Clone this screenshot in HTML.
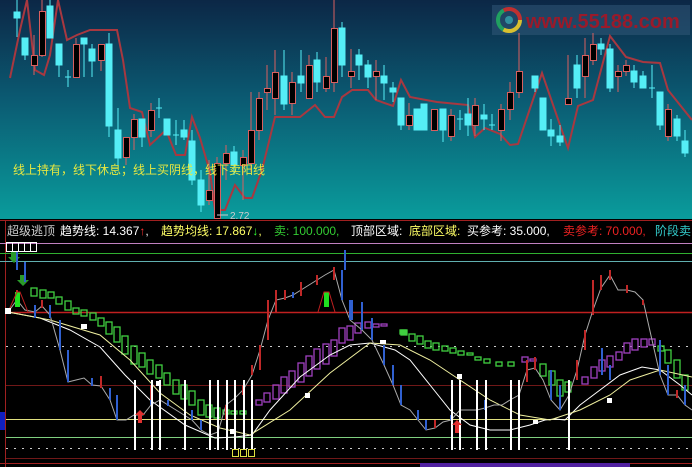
<!DOCTYPE html>
<html><head><meta charset="utf-8"><style>
html,body{margin:0;padding:0;background:#000;width:692px;height:467px;overflow:hidden}
svg{display:block}
text{font-family:"Liberation Sans","Noto Sans CJK SC",sans-serif}
</style></head><body>
<svg width="692" height="467" viewBox="0 0 692 467" xmlns="http://www.w3.org/2000/svg">
<defs><linearGradient id="bg" x1="0" y1="0" x2="0" y2="1"><stop offset="0" stop-color="#0c2746"/><stop offset="0.45" stop-color="#0b5a72"/><stop offset="1" stop-color="#0a9c9c"/></linearGradient></defs>
<rect x="0" y="0" width="692" height="219" fill="url(#bg)"/>
<rect x="0" y="219" width="692" height="248" fill="#000"/>
<!-- logo -->
<rect x="492" y="5" width="198" height="30" fill="#3a6080" opacity="0.45"/>
<circle cx="509" cy="20" r="11" fill="none" stroke="#d8c030" stroke-width="4" stroke-dasharray="23 46"/>
<circle cx="509" cy="20" r="11" fill="none" stroke="#20a060" stroke-width="4" stroke-dasharray="0 23 23 46"/>
<circle cx="509" cy="20" r="11" fill="none" stroke="#c03030" stroke-width="4" stroke-dasharray="0 46 23 0"/>
<circle cx="509" cy="20" r="4" fill="#3090a0"/>
<text x="526" y="28" font-size="20" font-weight="bold" fill="#9a1a2a" font-family="Liberation Sans">www.55188.com</text>
<!-- MA line -->
<polyline fill="none" stroke="#a83840" stroke-width="2" points="10,78 20,30 27,0 35,70 44,75 50,55 58,0 67,40 77,35 90,30 117,30 123,60 130,108 142,112 150,145 166,130 176,155 185,155 192,117 200,138 210,172 215,210 225,210 235,185 245,198 252,198 262,170 275,117 300,117 315,105 325,117 334,117 342,97 352,90 368,90 376,100 393,106 401,80 410,97 426,100 437,102 468,105 475,137 485,128 500,134 510,145 518,144 542,73 568,148 578,106 593,100 610,36 626,57 643,62 660,63 668,90 692,120"/>
<!-- cyan candles -->
<g stroke="#55eef6" fill="#55eef6" stroke-width="1">
<path d="M17,0V37M25,38V60M50,0V38M59,44V77M84,38V77M92,44V77M109,33V137M118,108V165M142,119V147M167,119V135M184,120V140M192,130V185M201,170V212M234,146V175M284,50V110M301,50V92M317,52V92M342,22V77M359,49V80M368,60V88M384,65V100M393,82V102M401,98V130M417,109V130M424,104V130M443,109V142M468,98V136M484,104V130M535,76V92M543,98V130M551,119V146M560,125V146M577,55V98M601,38V55M610,44V92M634,65V88M643,71V88M660,92V130M677,115V141M685,130V157"/>
<rect x="14" y="12" width="6" height="6"/><rect x="22" y="38" width="6" height="17"/><rect x="47" y="6" width="6" height="32"/><rect x="56" y="44" width="6" height="21"/><rect x="81" y="38" width="6" height="6"/><rect x="89" y="49" width="6" height="12"/><rect x="106" y="44" width="6" height="82"/><rect x="115" y="130" width="6" height="28"/><rect x="139" y="119" width="6" height="18"/><rect x="164" y="119" width="6" height="16"/><rect x="181" y="130" width="6" height="7"/><rect x="189" y="141" width="6" height="39"/><rect x="198" y="180" width="6" height="25"/><rect x="231" y="152" width="6" height="13"/><rect x="281" y="76" width="6" height="28"/><rect x="298" y="76" width="6" height="7"/><rect x="314" y="60" width="6" height="22"/><rect x="339" y="28" width="6" height="37"/><rect x="356" y="55" width="6" height="10"/><rect x="365" y="65" width="6" height="12"/><rect x="381" y="76" width="6" height="7"/><rect x="390" y="88" width="6" height="4"/><rect x="398" y="98" width="6" height="27"/><rect x="414" y="109" width="6" height="21"/><rect x="421" y="104" width="6" height="26"/><rect x="440" y="109" width="6" height="21"/><rect x="465" y="114" width="6" height="11"/><rect x="481" y="115" width="6" height="4"/><rect x="532" y="76" width="6" height="12"/><rect x="540" y="98" width="6" height="32"/><rect x="548" y="130" width="6" height="6"/><rect x="557" y="136" width="6" height="6"/><rect x="574" y="65" width="6" height="23"/><rect x="598" y="44" width="6" height="5"/><rect x="607" y="49" width="6" height="39"/><rect x="631" y="71" width="6" height="11"/><rect x="640" y="76" width="6" height="12"/><rect x="657" y="92" width="6" height="33"/><rect x="674" y="119" width="6" height="17"/><rect x="682" y="141" width="6" height="12"/>
<path d="M65,77H71M156,108H162M173,135H179M457,119H463M489,125H495M649,88H655"/>
<path d="M68,70V87M159,98V118M176,120V145M460,110V130M492,114V130M652,65V98"/>
</g>
<!-- hollow candles -->
<g stroke="#d86060" fill="#000" stroke-width="1">
<path d="M34,35V75M42,0V57M76,38V77M101,44V71M126,137V165M134,114V150M151,103V137M209,160V205M217,157V218M226,145V180M243,150V200M251,92V172M259,92V140M267,65V110M275,50V115M292,72V115M309,55V98M326,57V92M334,0V92M351,49V88M376,60V100M409,103V130M434,109V130M451,109V141M475,98V136M501,104V141M510,82V120M519,33V98M568,55V104M585,38V98M593,33V65M618,65V92M626,60V76M668,104V141"/>
<rect x="31.5" y="55.5" width="6" height="10"/><rect x="39.5" y="11.5" width="6" height="44"/><rect x="73.5" y="44.5" width="6" height="33"/><rect x="98.5" y="44.5" width="6" height="16"/><rect x="123.5" y="137.5" width="6" height="20"/><rect x="131.5" y="119.5" width="6" height="18"/><rect x="148.5" y="110.5" width="6" height="20"/><rect x="206.5" y="190.5" width="6" height="10"/><rect x="214.5" y="163.5" width="6" height="55"/><rect x="223.5" y="153.5" width="6" height="10"/><rect x="240.5" y="157.5" width="6" height="8"/><rect x="248.5" y="130.5" width="6" height="33"/><rect x="256.5" y="98.5" width="6" height="32"/><rect x="264.5" y="88.5" width="6" height="4"/><rect x="272.5" y="72.5" width="6" height="26"/><rect x="289.5" y="82.5" width="6" height="21"/><rect x="306.5" y="65.5" width="6" height="33"/><rect x="323.5" y="76.5" width="6" height="12"/><rect x="331.5" y="28.5" width="6" height="54"/><rect x="348.5" y="71.5" width="6" height="5"/><rect x="373.5" y="71.5" width="6" height="5"/><rect x="406.5" y="115.5" width="6" height="10"/><rect x="431.5" y="109.5" width="6" height="21"/><rect x="448.5" y="115.5" width="6" height="21"/><rect x="472.5" y="105.5" width="6" height="20"/><rect x="498.5" y="109.5" width="6" height="21"/><rect x="507.5" y="92.5" width="6" height="17"/><rect x="516.5" y="71.5" width="6" height="21"/><rect x="565.5" y="98.5" width="6" height="6"/><rect x="582.5" y="55.5" width="6" height="21"/><rect x="590.5" y="44.5" width="6" height="16"/><rect x="615.5" y="71.5" width="6" height="5"/><rect x="623.5" y="65.5" width="6" height="6"/><rect x="665.5" y="109.5" width="6" height="27"/>
</g>
<text x="13" y="174" font-size="12" fill="#e8e840">线上持有，线下休息；线上买阴线，线下卖阳线</text>
<path d="M217,215H228" stroke="#ccc"/>
<text x="230" y="219" font-size="10" fill="#ccc" font-family="Liberation Sans">2.72</text>
<!-- lower panel frame -->
<path d="M0,220.5H692" stroke="#a02020"/>
<path d="M5.5,220V467" stroke="#a02020"/>
<path d="M0,463.5H692" stroke="#a02020"/>
<rect x="420" y="463" width="210" height="4" fill="#5020a0"/>
<text y="235" font-size="12" font-family="Liberation Sans,Noto Sans CJK SC,sans-serif"><tspan x="7" fill="#ccc">超级逃顶</tspan><tspan x="60" fill="#fff">趋势线: 14.367</tspan><tspan fill="#f33">↑</tspan><tspan fill="#fff">,</tspan><tspan x="161" fill="#ff6">趋势均线: 17.867</tspan><tspan fill="#3f3">↓</tspan><tspan fill="#ff6">,</tspan><tspan x="274" fill="#3c3">卖: 100.000,</tspan><tspan x="351" fill="#fff">顶部区域:</tspan><tspan x="409" fill="#ff6">底部区域:</tspan><tspan x="467" fill="#fff">买参考: 35.000,</tspan><tspan x="563" fill="#e22">卖参考: 70.000,</tspan><tspan x="655" fill="#3cc">阶段卖</tspan></text>
<path d="M0,243.5H692" stroke="#c080c0"/>
<path d="M0,253.5H692" stroke="#30b030"/>
<path d="M0,261.5H692" stroke="#60b0b0"/>
<g fill="none" stroke="#fff"><rect x="6.5" y="242.5" width="6" height="9"/><rect x="12.5" y="242.5" width="6" height="9"/><rect x="18.5" y="242.5" width="6" height="9"/><rect x="24.5" y="242.5" width="6" height="9"/><rect x="30.5" y="242.5" width="6" height="9"/></g>
<path d="M11,252h6v5h3l-6,6l-6,-6h3z" fill="#2a9a2a"/>
<path d="M20,275h6v5h3l-6,6l-6,-6h3z" fill="#2a9a2a"/>
<!-- horizontal levels -->
<path d="M6,312.5H692" stroke="#c02020" stroke-width="1.5"/>
<path d="M6,346.5H692" stroke="#ccc" stroke-dasharray="2 6"/>
<path d="M6,385.5H692" stroke="#701818"/>
<path d="M6,419.5H692" stroke="#e0e080"/>
<path d="M6,437.5H692" stroke="#80d080"/>
<path d="M6,448.5H692" stroke="#ccc" stroke-dasharray="2 6"/>
<path d="M6,458.5H692" stroke="#701818"/>
<rect x="0" y="412" width="5" height="18" fill="#1020c0"/>
<!-- green boxes -->
<g fill="none" stroke="#40d040" stroke-width="1.3">
<rect x="31" y="288" width="6" height="8"/><rect x="40" y="290" width="6" height="8"/><rect x="48" y="292" width="6" height="6"/><rect x="56" y="297" width="6" height="7"/><rect x="65" y="301" width="6" height="9"/><rect x="73" y="308" width="6" height="6"/><rect x="81" y="310" width="6" height="6"/><rect x="90" y="313" width="6" height="7"/><rect x="98" y="318" width="6" height="8"/><rect x="106" y="322" width="6" height="12"/><rect x="114" y="327" width="6" height="15"/><rect x="122" y="336" width="6" height="18"/><rect x="131" y="346" width="6" height="18"/><rect x="139" y="353" width="6" height="14"/><rect x="147" y="360" width="6" height="14"/><rect x="156" y="365" width="6" height="13"/><rect x="164" y="373" width="6" height="12"/><rect x="173" y="380" width="6" height="14"/><rect x="181" y="385" width="6" height="14"/><rect x="189" y="391" width="6" height="14"/><rect x="198" y="400" width="6" height="15"/><rect x="206" y="405" width="6" height="12"/><rect x="214" y="408" width="6" height="10"/><rect x="223" y="410" width="6" height="4"/><rect x="231" y="411" width="6" height="3"/><rect x="240" y="411" width="6" height="3"/>
<rect x="400" y="330" width="6" height="4" fill="#40d040"/><rect x="401" y="330" width="6" height="5"/><rect x="409" y="334" width="6" height="7"/><rect x="417" y="336" width="6" height="8"/><rect x="425" y="341" width="6" height="7"/><rect x="433" y="343" width="6" height="7"/><rect x="442" y="346" width="6" height="5"/><rect x="450" y="348" width="6" height="5"/><rect x="458" y="351" width="6" height="4"/><rect x="467" y="353" width="6" height="2"/><rect x="475" y="357" width="6" height="3"/><rect x="484" y="359" width="6" height="4"/><rect x="496" y="362" width="6" height="4"/><rect x="508" y="362" width="6" height="4"/>
<rect x="540" y="364" width="6" height="12"/><rect x="549" y="371" width="6" height="14"/><rect x="557" y="380" width="6" height="16"/><rect x="565" y="382" width="6" height="10"/>
<rect x="658" y="346" width="6" height="5"/><rect x="665" y="350" width="6" height="13"/><rect x="674" y="360" width="6" height="18"/><rect x="682" y="375" width="6" height="15"/>
</g>
<!-- purple boxes -->
<g fill="none" stroke="#a040c0" stroke-width="1.3">
<rect x="256" y="400" width="6" height="5"/><rect x="264" y="393" width="6" height="9"/><rect x="273" y="385" width="6" height="14"/><rect x="281" y="377" width="6" height="16"/><rect x="289" y="371" width="6" height="16"/><rect x="298" y="363" width="6" height="19"/><rect x="306" y="356" width="6" height="20"/><rect x="314" y="349" width="6" height="20"/><rect x="323" y="344" width="6" height="20"/><rect x="331" y="340" width="6" height="16"/><rect x="339" y="328" width="6" height="15"/><rect x="347" y="326" width="6" height="14"/><rect x="355" y="323" width="6" height="10"/><rect x="365" y="322" width="6" height="6"/><rect x="373" y="324" width="6" height="3"/><rect x="381" y="324" width="6" height="2"/>
<rect x="522" y="357" width="6" height="5"/><rect x="530" y="359" width="6" height="2"/>
<rect x="582" y="377" width="6" height="7"/><rect x="591" y="367" width="6" height="11"/><rect x="599" y="360" width="6" height="11"/><rect x="607" y="356" width="6" height="11"/><rect x="616" y="352" width="6" height="8"/><rect x="624" y="343" width="6" height="10"/><rect x="632" y="339" width="6" height="11"/><rect x="641" y="339" width="6" height="8"/><rect x="649" y="339" width="6" height="6"/>
</g>
<!-- curves -->
<polyline fill="none" stroke="#fff" stroke-width="1" points="8,312 40,318 70,330 100,347 125,375 150,400 185,425 215,438 235,437 252,435 270,410 300,377 330,355 350,345 370,343 395,350 410,360 430,385 450,410 470,425 490,430 510,430 530,425 545,420 555,419 565,420 580,405 600,390 620,375 642,367 660,370 680,385 692,395"/>
<polyline fill="none" stroke="#f0f0a0" stroke-width="1" points="8,312 50,320 100,335 130,360 160,393 190,415 220,428 250,435 290,410 330,373 370,343 400,345 430,360 460,380 490,400 520,415 550,420 580,410 610,395 630,380 660,370 692,377"/>
<!-- zigzag -->
<polyline fill="none" stroke="#aaa" stroke-width="1" points="8,312 17,300 25,310 35,312 42,306 50,315 60,350 68,382 76,380 84,378 92,385 101,386 110,400 117,420 126,420 134,415 143,415 151,405 160,400 168,405 176,410 184,415 192,420 201,430 210,435 218,432 226,405 235,398 243,390 252,375 260,350 268,320 276,300 285,298 293,295 301,290 309,285 317,280 325,275 334,270 342,300 350,320 362,330 372,340 384,365 393,385 401,405 410,410 418,420 426,430 435,428 443,422 451,420 460,410 468,410 477,410 485,408 494,405 502,405 510,400 519,395 527,370 535,368 543,380 551,400 560,410 569,395 577,370 585,335 593,310 601,288 610,275 618,290 627,290 635,292 643,300 652,340 660,375 668,395 677,395 685,405 692,410"/>
<g fill="none" stroke-width="2">
<path stroke="#3060d0" d="M17,252V270M25,262V282M35,305V318M50,305V318M60,320V350M68,350V382M92,378V386M110,388V400M117,395V420M151,395V405M168,400V406M192,410V420M201,420V430M210,425V435M268,300V320M293,292V298M342,270V300M350,300V320M345,250V270M352,300V320M362,302V330M372,318V340M384,345V365M393,365V385M401,385V405M418,410V420M426,420V430M451,415V420M460,405V418M485,400V410M551,370V400M560,385V410M602,348V375M610,365V380M660,340V375M668,365V395M685,385V405"/>
<path stroke="#c02828" d="M17,290V300M42,300V308M101,376V388M151,385V400M226,405V420M243,385V395M252,365V375M260,345V370M268,300V340M276,290V312M285,290V300M301,282V296M317,275V285M334,267V280M435,420V428M527,360V382M535,357V370M569,385V415M577,360V380M585,330V350M593,280V315M601,275V290M610,270V280M627,285V293M643,300V305M677,390V398"/>
</g>
<rect x="15" y="292" width="5" height="15" fill="#20e020"/>
<rect x="324" y="292" width="5" height="15" fill="#20e020"/>
<path d="M8,312L17,292L20,292L28,312M318,312L324,292L329,292L335,312" fill="none" stroke="#c02020"/>
<!-- white markers -->
<g fill="#fff"><rect x="5" y="308" width="6" height="6"/><rect x="81" y="324" width="6" height="5"/><rect x="156" y="381" width="5" height="5"/><rect x="230" y="429" width="5" height="5"/><rect x="305" y="393" width="5" height="5"/><rect x="380" y="340" width="6" height="4"/><rect x="457" y="374" width="5" height="5"/><rect x="533" y="420" width="5" height="4"/><rect x="607" y="398" width="5" height="5"/></g>
<!-- white vertical lines -->
<path stroke="#fff" stroke-width="2" d="M135,380V450M152,380V450M160,380V450M185,380V450M210,380V450M218,380V450M227,380V450M235,380V450M244,380V450M252,380V450M452,380V450M460,380V450M477,380V450M486,380V450M511,380V450M519,380V450M569,380V450"/>
<g fill="none" stroke="#e0e040"><rect x="232.5" y="449.5" width="6" height="7"/><rect x="240.5" y="449.5" width="6" height="7"/><rect x="248.5" y="449.5" width="6" height="7"/></g>
<path d="M140,410l-5,5h3v8h4v-8h3z" fill="#e03030"/>
<path d="M457,420l-5,5h3v8h4v-8h3z" fill="#e03030"/>
</svg>
</body></html>
